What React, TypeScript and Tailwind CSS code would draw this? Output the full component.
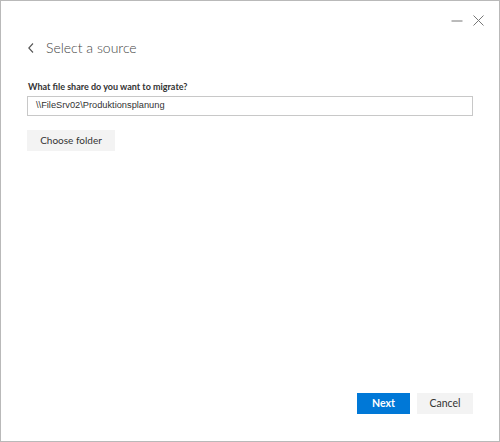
const ui = "font-['Segoe_UI','Lato',sans-serif]";

export default function App() {
  return (
    <div
      className={`flex h-[442px] w-[500px] flex-col border border-[#b9b9b9] bg-white ${ui}`}
    >
      {/* title bar */}
      <div className="flex h-[30px] items-start justify-end gap-[10px] pr-[15px] pt-[14px]">
        <svg width="12" height="12" viewBox="0 0 12 12">
          <line x1="0.5" y1="6" x2="11.5" y2="6" stroke="#777" strokeWidth="1" />
        </svg>
        <svg width="11" height="11" viewBox="0 0 11 11">
          <path d="M0.5 0.5 L10.5 10.5 M10.5 0.5 L0.5 10.5" stroke="#777" strokeWidth="1" />
        </svg>
      </div>

      <div className="flex flex-1 flex-col px-[26px]">
        <div className="mt-[7px] flex items-center gap-[12px] pl-[1px]">
          <svg width="6" height="10" viewBox="0 0 6 10">
            <path d="M5 0.5 L0.8 5 L5 9.5" fill="none" stroke="#555" strokeWidth="1.1" />
          </svg>
          <h1 className="text-[14px] font-light leading-[20px] text-[#444]">Select a source</h1>
        </div>

        <label className="mt-[22px] pl-[1px] text-[9px] font-bold leading-[13px] text-[#333]">
          What file share do you want to migrate?
        </label>
        <div className="mt-[3px] flex h-[20px] items-center border border-[#c8c8c8] px-[8px]">
          <span className="font-['Liberation_Sans',Arial,sans-serif] text-[9.25px] text-[#333]">
            \\FileSrv02\Produktionsplanung
          </span>
        </div>

        <div className="mt-[10px]">
          <button
            type="button"
            className="h-[21px] w-[88px] bg-[#f3f3f3] text-[10px] text-[#333]"
          >
            Choose folder
          </button>
        </div>

        <div className="mt-auto mb-[27px] flex justify-end gap-[7px]">
          <button
            type="button"
            className="h-[21px] w-[53px] bg-[#0078d7] text-[10.5px] font-bold text-white"
          >
            Next
          </button>
          <button
            type="button"
            className="h-[21px] w-[56px] bg-[#f3f3f3] text-[10.5px] text-[#333]"
          >
            Cancel
          </button>
        </div>
      </div>
    </div>
  );
}
